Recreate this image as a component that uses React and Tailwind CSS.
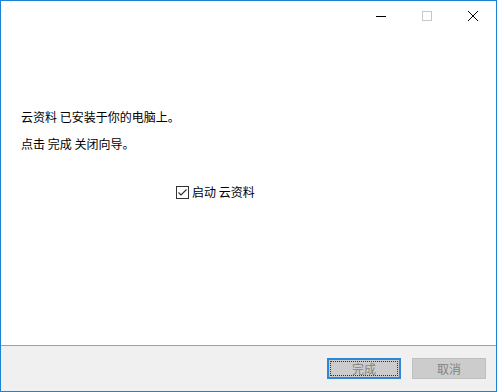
const font = { fontFamily: '"Noto Sans CJK SC", "Noto Sans", sans-serif' };

const TitleButton = ({ children }) => (
  <div className="w-[46px] h-[30px] flex items-center justify-center">{children}</div>
);

export default function App() {
  return (
    <div
      className="w-[497px] h-[392px] border border-[#1883d7] bg-white flex flex-col text-[12px] text-black"
      style={font}
    >
      {/* title bar */}
      <div className="h-[30px] flex justify-end">
        <TitleButton>
          <svg width="10" height="10" viewBox="0 0 10 10">
            <path d="M0 5.5h10" stroke="#000" strokeWidth="1" />
          </svg>
        </TitleButton>
        <TitleButton>
          <svg width="10" height="10" viewBox="0 0 10 10">
            <rect x="0.5" y="0.5" width="9" height="9" fill="none" stroke="#c8c8c8" strokeWidth="1" />
          </svg>
        </TitleButton>
        <TitleButton>
          <svg width="10" height="10" viewBox="0 0 10 10">
            <path d="M0 0L10 10M10 0L0 10" stroke="#000" strokeWidth="1" />
          </svg>
        </TitleButton>
      </div>

      {/* content */}
      <div className="flex-1 pl-[20px] pt-[78px]">
        <p className="leading-[16px]">云资料 已安装于你的电脑上。</p>
        <p className="leading-[16px] mt-[11px]">点击 完成 关闭向导。</p>
        <div className="mt-[32px] ml-[155px] h-[16px] flex items-center gap-[3px]">
          <div className="w-[13px] h-[13px] border border-[#333] bg-white flex items-center justify-center">
            <svg width="11" height="11" viewBox="0 0 11 11">
              <path d="M1.5 5.5L4 8L9.5 2.5" fill="none" stroke="#333" strokeWidth="1.2" />
            </svg>
          </div>
          <span className="leading-[16px]">启动 云资料</span>
        </div>
      </div>

      {/* footer */}
      <div className="h-[46px] border-t border-[#a0a0a0] bg-[#f0f0f0] flex justify-end items-start pt-[12px] pr-[10px] gap-[11px]">
        <div className="w-[74px] h-[21px] border-2 border-[#3186d6] bg-[#cccccc] p-px">
          <div className="w-full h-full border border-dotted border-[#333] flex items-center justify-center text-[#838383] leading-none">
            完成
          </div>
        </div>
        <div className="w-[74px] h-[21px] border border-[#bfbfbf] bg-[#cccccc] flex items-center justify-center text-[#838383] leading-none">
          取消
        </div>
      </div>
    </div>
  );
}
